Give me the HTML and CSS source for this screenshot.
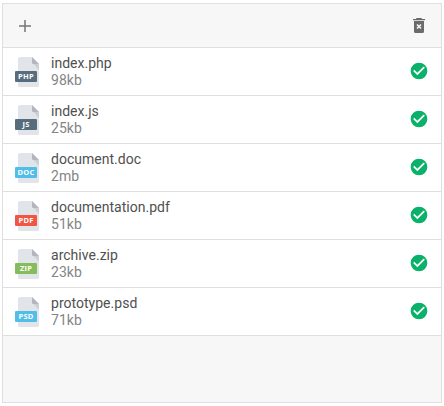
FILE: index.html
```
<!DOCTYPE html>
<html lang="en">
<head>
<meta charset="utf-8">
<title>Files</title>
<link rel="stylesheet" href="styles.css">
</head>
<body>
<svg class="defs" width="0" height="0" aria-hidden="true">
  <symbol id="sheet" viewBox="0 0 24 30">
    <path fill="#e1e4e8" d="M5 0h12l7 7v21.500a1.500 1.500 0 0 1-1.500 1.500h-18a1.500 1.500 0 0 1-1.500-1.500v-26.500a2 2 0 0 1 2-2z"/>
    <path fill="#cbd0d4" d="M18.500 7H24v6z"/>
    <path fill="#b0b6bb" d="M17 0l7 7h-5.500a1.500 1.500 0 0 1-1.500-1.500z"/>
    <path fill="#cbd0d4" d="M3 24h18v1H3z"/>
  </symbol>
  <symbol id="check" viewBox="0 0 24 24">
    <path fill="#0ab169" d="M12 2a10 10 0 1 0 0 20 10 10 0 0 0 0-20zm-2 15-5-5 1.410-1.410L10 14.170l7.590-7.590L19 8z"/>
  </symbol>
</svg>
<main class="vault">
  <header class="toolbar">
    <svg class="add" viewBox="0 0 14 14"><path d="M7 1v12M1 7h12"/></svg>
    <svg class="trash" viewBox="0 0 12 15"><path d="M3.500 0h5l.5 1h3v1.300H0V1h3zM1 3h10v10.500a1.500 1.500 0 0 1-1.500 1.500h-7A1.500 1.500 0 0 1 1 13.500z"/><path class="cross" d="M4 6.500l4 4M8 6.500l-4 4"/></svg>
  </header>
  <ul class="files">
    <li class="file"><span class="icon dark"><svg><use href="#sheet"/></svg><b>PHP</b></span><div class="info"><div>index.php</div><div class="size">98kb</div></div><svg class="done"><use href="#check"/></svg></li>
    <li class="file"><span class="icon dark"><svg><use href="#sheet"/></svg><b>JS</b></span><div class="info"><div>index.js</div><div class="size">25kb</div></div><svg class="done"><use href="#check"/></svg></li>
    <li class="file"><span class="icon blue"><svg><use href="#sheet"/></svg><b>DOC</b></span><div class="info"><div>document.doc</div><div class="size">2mb</div></div><svg class="done"><use href="#check"/></svg></li>
    <li class="file"><span class="icon red"><svg><use href="#sheet"/></svg><b>PDF</b></span><div class="info"><div>documentation.pdf</div><div class="size">51kb</div></div><svg class="done"><use href="#check"/></svg></li>
    <li class="file"><span class="icon green"><svg><use href="#sheet"/></svg><b>ZIP</b></span><div class="info"><div>archive.zip</div><div class="size">23kb</div></div><svg class="done"><use href="#check"/></svg></li>
    <li class="file"><span class="icon blue"><svg><use href="#sheet"/></svg><b>PSD</b></span><div class="info"><div>prototype.psd</div><div class="size">71kb</div></div><svg class="done"><use href="#check"/></svg></li>
  </ul>
</main>
</body>
</html>
```
FILE: styles.css
```
* { box-sizing: border-box; }
body {
  margin: 0;
  padding: 3px 2px;
  background: #fff;
  font: 14px/17px Roboto, sans-serif;
  color: #505050;
}
.defs { position: absolute; }
.vault {
  width: 440px;
  height: 400px;
  border: 1px solid #dfdfdf;
  background: #f7f7f7;
}
.toolbar {
  display: flex;
  align-items: center;
  justify-content: space-between;
  height: 44px;
  padding: 0 16px 0 15px;
  border-bottom: 1px solid #dfdfdf;
}
.add {
  width: 14px;
  height: 14px;
  stroke: #757575;
  stroke-width: 1.5;
}
.trash {
  width: 12px;
  height: 15px;
  fill: #6b6b6b;
}
.cross { stroke: #f7f7f7; stroke-width: 1.6; }
.files { list-style: none; margin: 0; padding: 0; }
.file {
  display: flex;
  align-items: center;
  height: 48px;
  padding: 0 12px;
  background: #fff;
  border-bottom: 1px solid #dfdfdf;
}
.icon {
  position: relative;
  width: 24px;
  height: 30px;
  margin-right: 12px;
}
.icon svg { display: block; width: 24px; height: 30px; }
.icon b {
  position: absolute;
  left: 0;
  top: 14px;
  width: 22px;
  height: 11px;
  border-radius: 1px;
  color: #fff;
  font: 700 7.5px/11px "Open Sans", sans-serif;
  letter-spacing: .2px;
  text-align: center;
}
.dark b { background: #576d7e; }
.blue b { background: #50bee8; }
.red b { background: #f15642; }
.green b { background: #84bd5a; }
.info { flex: 1; letter-spacing: .02px; }
.size { color: #858585; }
.done { width: 20px; height: 20px; margin-bottom: .5px; }
```
